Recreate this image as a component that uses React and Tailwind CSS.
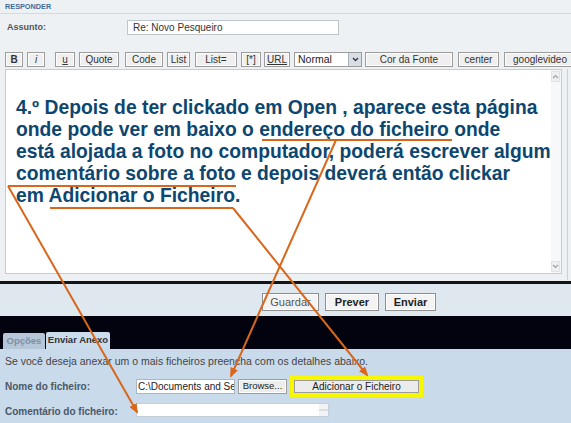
import React from 'react';

const toolbar = [
  { label: 'B', w: 'w-[18px]', ml: 'ml-0', cls: 'font-bold' },
  { label: 'i', w: 'w-[18px]', ml: 'ml-[4px]', cls: 'italic' },
  { label: 'u', w: 'w-[20px]', ml: 'ml-[10px]', cls: 'underline' },
  { label: 'Quote', w: 'w-[40px]', ml: 'ml-[4px]', cls: '' },
  { label: 'Code', w: 'w-[38px]', ml: 'ml-[6px]', cls: '' },
  { label: 'List', w: 'w-[23px]', ml: 'ml-[4px]', cls: '' },
  { label: 'List=', w: 'w-[42px]', ml: 'ml-[5px]', cls: '' },
  { label: '[*]', w: 'w-[20px]', ml: 'ml-[4px]', cls: '' },
  { label: 'URL', w: 'w-[26px]', ml: 'ml-[3px]', cls: 'underline' },
];

const lines = [
  '4.º Depois de ter clickado em Open , aparece esta página',
  'onde pode ver em baixo o endereço do ficheiro onde',
  'está alojada a foto no computador, poderá escrever algum',
  'comentário sobre a foto e depois deverá então clickar',
  'em Adicionar o Ficheiro.',
];

const ToolBtn = ({ children, className }) => (
  <div
    className={`h-[15px] flex items-center justify-center shrink-0 bg-[#efefef] border border-[#9c9c9c] shadow-[inset_0_0_0_1px_#fdfdfd] text-[10px] leading-none text-[#333] ${className}`}
  >
    {children}
  </div>
);

const Chevron = ({ up }) => (
  <svg width="7" height="5" viewBox="0 0 7 5">
    <path d={up ? 'M1 4 L3.5 1.5 L6 4' : 'M1 1 L3.5 3.5 L6 1'} fill="none" stroke="#9aa4ae" strokeWidth="1.2" />
  </svg>
);

const App = () => {
  return (
    <div className="relative w-[571px] h-[423px] overflow-hidden flex flex-col font-['Liberation_Sans',Arial,sans-serif]">
      {/* top panel */}
      <div className="h-[284px] shrink-0 flex flex-col bg-[#edf1f4] border-b-[3px] border-[#141414]">
        <div className="h-[14px] shrink-0 border-b border-[#d3dbe2] pl-[5px] pt-[2px] text-[7.3px] leading-[9px] font-bold text-[#3c6d9d]">
          RESPONDER
        </div>
        <div className="mt-[6px] h-[15px] flex items-center">
          <div className="w-[127px] pl-[7px] text-[9px] font-bold text-[#555]">Assunto:</div>
          <div className="w-[212px] h-[15px] bg-white border border-[#bcc4cc] pl-[5px] flex items-center text-[10px] text-[#333]">
            Re: Novo Pesqueiro
          </div>
        </div>
        <div className="mt-[17px] h-[15px] flex pl-[5px]">
          {toolbar.map((b) => (
            <ToolBtn key={b.label} className={`${b.w} ${b.ml} ${b.cls}`}>{b.label}</ToolBtn>
          ))}
          <div className="ml-[4px] w-[68px] h-[15px] shrink-0 flex bg-white border border-[#9c9c9c]">
            <div className="flex-1 pl-[3px] flex items-center text-[10.5px] text-[#222]">Normal</div>
            <div className="w-[13px] bg-[#d7dee6] border-l border-[#a8b2bc] flex items-center justify-center">
              <svg width="7" height="5" viewBox="0 0 7 5">
                <path d="M1 1 L3.5 3.5 L6 1" fill="none" stroke="#333" strokeWidth="1.3" />
              </svg>
            </div>
          </div>
          <ToolBtn className="ml-[3px] w-[88px]">Cor da Fonte</ToolBtn>
          <ToolBtn className="ml-[5px] w-[41px]">center</ToolBtn>
          <ToolBtn className="ml-[5px] w-[72px]">googlevideo</ToolBtn>
        </div>
        <div className="mt-[2px] flex-1 flex pl-[5px]">
          <div className="w-[557px] h-[205px] flex bg-white border border-[#c4cbd2]">
            <div className="flex-1 pl-[10px] pt-[27px] font-bold text-[19.3px] leading-[22px] text-[#0d466e]">
              {lines.map((l) => (
                <div key={l} className="whitespace-nowrap">{l}</div>
              ))}
            </div>
            <div className="w-[12px] flex flex-col justify-between py-[1px] pr-[1px] bg-[#f7f8f9]">
              <div className="h-[11px] bg-[#eef0f2] border border-[#dfe3e7] flex items-center justify-center">
                <Chevron up />
              </div>
              <div className="h-[11px] bg-[#eef0f2] border border-[#dfe3e7] flex items-center justify-center">
                <Chevron />
              </div>
            </div>
          </div>
          <div className="ml-[5px] w-px h-[211px] bg-[#c9d1d8]" />
        </div>
      </div>

      {/* buttons */}
      <div className="h-[32px] shrink-0 bg-[#dfe7ef] pt-[9px] pl-[262px] flex">
        <div className="w-[57px] h-[18px] flex items-center justify-center bg-[#f3f3f3] border border-[#8e8e8e] shadow-[inset_0_0_0_1px_#fff] text-[11px] text-[#555]">
          Guardar
        </div>
        <div className="ml-[6px] w-[54px] h-[18px] flex items-center justify-center bg-[#f3f3f3] border border-[#8e8e8e] shadow-[inset_0_0_0_1px_#fff] text-[11px] font-bold text-[#222]">
          Prever
        </div>
        <div className="ml-[6px] w-[51px] h-[18px] flex items-center justify-center bg-[#f3f3f3] border border-[#8e8e8e] shadow-[inset_0_0_0_1px_#fff] text-[11px] font-bold text-[#222]">
          Enviar
        </div>
      </div>

      {/* tabs */}
      <div className="h-[33px] shrink-0 bg-[#03030f] flex items-end pl-[3px]">
        <div className="w-[42px] h-[16px] flex items-center justify-center rounded-t-[2px] bg-[#b4c6d8] text-[9.5px] font-bold text-[#7f8fa0]">
          Opções
        </div>
        <div className="ml-px w-[64px] h-[17px] flex items-center justify-center rounded-t-[2px] bg-[#cbdcec] text-[9.5px] font-bold text-[#333]">
          Enviar Anexo
        </div>
      </div>

      {/* attachment form */}
      <div className="flex-1 bg-[#c9daeb] flex flex-col">
        <div className="pt-[6px] pl-[5px] text-[10.5px] leading-[13px] text-[#444]">
          Se você deseja anexar um o mais ficheiros preencha com os detalhes abaixo.
        </div>
        <div className="mt-[8px] flex items-center h-[21px]">
          <div className="w-[136px] pl-[5px] text-[10px] font-bold text-[#4a5866]">Nome do ficheiro:</div>
          <div className="w-[99px] h-[15px] bg-white border border-[#a9b6c3] flex items-center pl-[1px] overflow-hidden whitespace-nowrap text-[10px] text-[#222]">
            C:\Documents and Set
          </div>
          <div className="ml-[3px] w-[49px] h-[15px] flex items-center justify-center bg-[#ededed] border border-[#9c9c9c] shadow-[inset_0_0_0_1px_#fff] text-[9.5px] text-[#222]">
            Browse...
          </div>
          <div className="ml-[3px] w-[133px] h-[21px] border-[4px] border-[#f7f700] bg-[#f7f700] flex">
            <div className="flex-1 flex items-center justify-center bg-[#ececec] border border-[#9c9c9c] text-[10px] text-[#222]">
              Adicionar o Ficheiro
            </div>
          </div>
        </div>
        <div className="mt-[6px] flex items-start">
          <div className="w-[136px] pl-[5px] pt-px text-[10px] font-bold text-[#4a5866]">Comentário do ficheiro:</div>
          <div className="w-[193px] h-[14px] bg-white border border-[#c4ced8] flex justify-end">
            <div className="w-[9px] flex flex-col justify-between bg-[#f2f3f4]">
              <div className="h-[6px] border-b border-[#dde1e5]" />
              <div className="h-[6px] border-t border-[#dde1e5]" />
            </div>
          </div>
        </div>
      </div>

      {/* annotation arrows */}
      <svg className="absolute inset-0 pointer-events-none" width="571" height="423" viewBox="0 0 571 423">
        <defs>
          <marker id="ah" markerWidth="10" markerHeight="8" refX="8" refY="4" orient="auto" markerUnits="userSpaceOnUse">
            <path d="M0 0 L10 4 L0 8 Z" fill="#d8661b" />
          </marker>
        </defs>
        <g stroke="#d8661b" strokeWidth="2" fill="none">
          <path d="M262 140 H452" />
          <path d="M336 140 L231 376" markerEnd="url(#ah)" />
          <path d="M8 186 H236" />
          <path d="M8 186 L137 412" markerEnd="url(#ah)" />
          <path d="M50 208 H233" />
          <path d="M233 208 L367 375" markerEnd="url(#ah)" />
        </g>
      </svg>
    </div>
  );
};

export default App;
